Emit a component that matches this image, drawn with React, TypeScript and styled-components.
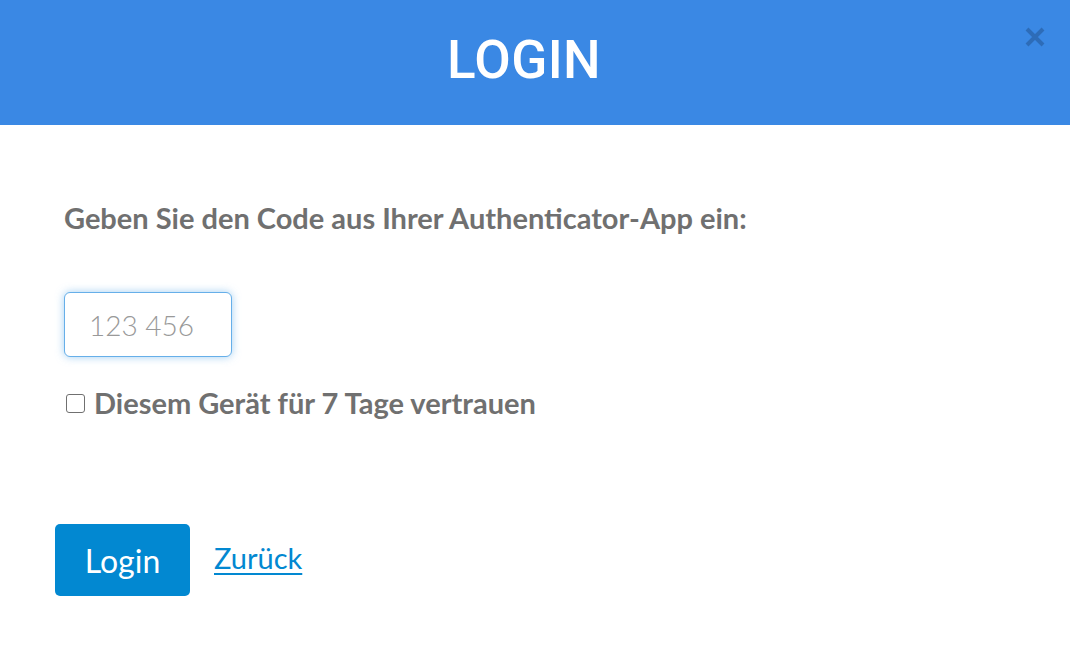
import React from "react";
import styled, { createGlobalStyle } from "styled-components";

const Global = createGlobalStyle`
  html, body { margin: 0; padding: 0; background: #fff; }
  body { font-family: Lato, "Liberation Sans", sans-serif; }
  * { box-sizing: border-box; }
`;

const Page = styled.div`
  width: 1070px;
  height: 666px;
  background: #fff;
  display: flex;
  flex-direction: column;
`;

const Header = styled.header`
  position: relative;
  height: 125px;
  background: #3a88e4;
  display: flex;
  align-items: center;
  justify-content: center;
  padding-right: 22px;
`;

const Title = styled.h1`
  margin: -4px 0 0;
  font-family: Roboto, "Liberation Sans", sans-serif;
  font-weight: 500;
  font-size: 53px;
  color: #fff;
  letter-spacing: 0.4px;
  line-height: 1;
`;

const Close = styled.button`
  position: absolute;
  top: 24px;
  right: 22px;
  border: 0;
  background: transparent;
  padding: 0;
  width: 26px;
  height: 26px;
  display: flex;
  align-items: center;
  justify-content: center;
  cursor: pointer;
`;

const Body = styled.main`
  display: flex;
  flex-direction: column;
  align-items: flex-start;
  padding: 78px 0 0 64px;
`;

const Prompt = styled.p`
  margin: 0;
  font-weight: 700;
  font-size: 29px;
  line-height: 30px;
  color: #707070;
`;

const CodeInput = styled.input`
  margin-top: 59px;
  width: 168px;
  height: 65px;
  border: 1px solid #66afe9;
  border-radius: 6px;
  box-shadow: 0 0 8px rgba(102, 175, 233, 0.6);
  padding: 0 0 0 24px;
  font-family: Lato, "Liberation Sans", sans-serif;
  font-weight: 300;
  font-size: 28px;
  color: #555;
  outline: none;
  &::placeholder { color: #999; }
`;

const TrustRow = styled.label`
  margin-top: 31px;
  display: flex;
  align-items: center;
  gap: 9px;
  font-weight: 700;
  font-size: 29px;
  line-height: 30px;
  color: #707070;
  cursor: pointer;
`;

const Check = styled.input`
  margin: 0 0 0 2px;
  width: 19px;
  height: 19px;
  appearance: none;
  border: 1.5px solid #707070;
  border-radius: 3px;
  background: #fff;
`;

const Actions = styled.div`
  margin-top: 106px;
  margin-left: -9px;
  display: flex;
  align-items: center;
  gap: 24px;
`;

const LoginButton = styled.button`
  width: 135px;
  height: 72px;
  border: 0;
  border-radius: 5px;
  background: #0288d1;
  color: #fff;
  font-family: Lato, "Liberation Sans", sans-serif;
  font-size: 32px;
  font-weight: 400;
  cursor: pointer;
`;

const BackLink = styled.a`
  font-size: 29px;
  color: #0288d1;
  text-decoration: underline;
  text-underline-offset: 4px;
  text-decoration-thickness: 1.5px;
  margin-top: -6px;
`;

export default function App() {
  return (
    <Page>
      <Global />
      <Header>
        <Title>LOGIN</Title>
        <Close aria-label="Schließen">
          <svg width="20" height="20" viewBox="0 0 20 20">
            <path d="M2 2 L18 18 M18 2 L2 18" stroke="#2d6cb8" strokeWidth="4" strokeLinecap="butt" />
          </svg>
        </Close>
      </Header>
      <Body>
        <Prompt>Geben Sie den Code aus Ihrer Authenticator-App ein:</Prompt>
        <CodeInput placeholder="123 456" />
        <TrustRow>
          <Check type="checkbox" />
          Diesem Gerät für 7 Tage vertrauen
        </TrustRow>
        <Actions>
          <LoginButton>Login</LoginButton>
          <BackLink href="#">Zurück</BackLink>
        </Actions>
      </Body>
    </Page>
  );
}
